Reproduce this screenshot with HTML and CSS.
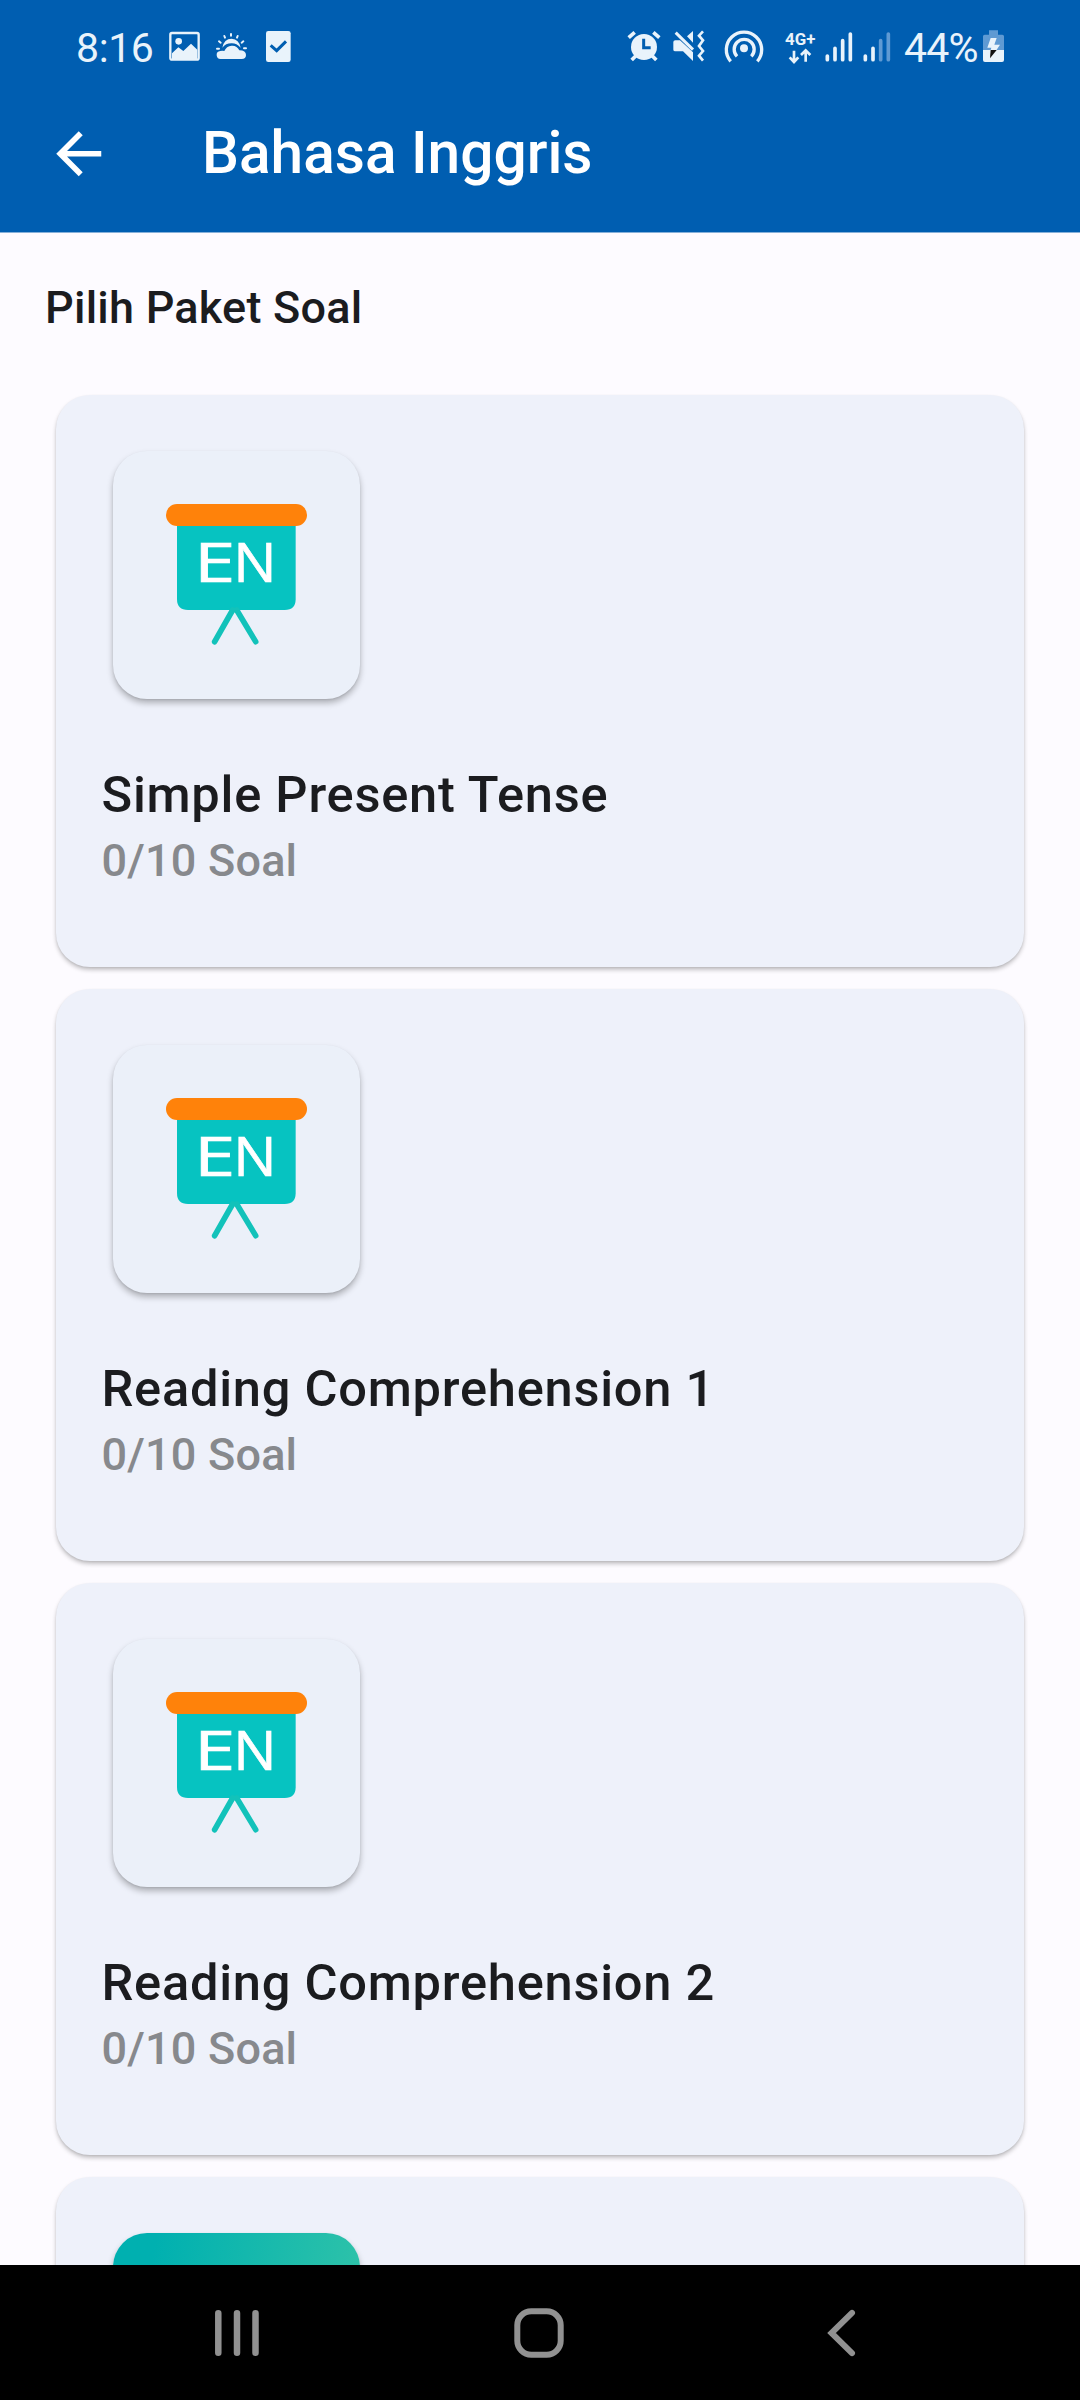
FILE: index.html
```html
<!DOCTYPE html>
<html lang="id">
<head>
<meta charset="utf-8">
<title>Bahasa Inggris</title>
<link rel="stylesheet" href="styles.css">
</head>
<body>
<svg class="defs" aria-hidden="true">
  <symbol id="board" viewBox="360 360 459 459">
    <rect x="378" y="372" width="423" height="66" rx="33" fill="#ff820a"/>
    <path d="M411 438H767V657Q767 690 734 690H444Q411 690 411 657Z" fill="#06c3c1"/>
    <path d="M578 690L524 785M590 690L647 785" stroke="#12c2ba" stroke-width="17" stroke-linecap="round" fill="none"/>
    <text x="462" y="606" textLength="124" lengthAdjust="spacingAndGlyphs" class="board-text">E</text>
    <text x="580" y="606" textLength="130" lengthAdjust="spacingAndGlyphs" class="board-text">N</text>
  </symbol>
</svg>
<header class="header">
  <div class="status">
    <span class="time">8:16</span>
    <svg class="ic-picture" width="34" height="37" viewBox="384 84 102 111">
      <rect x="391" y="99" width="85" height="80" rx="5" fill="none" stroke="#e9f3fb" stroke-width="7"/>
      <circle cx="416" cy="124" r="10"/>
      <path d="M396 160L415 142L430 153L453 131L472 149V178H396Z"/>
    </svg>
    <svg class="ic-weather" width="34" height="37" viewBox="525 84 102 111">
      <path d="M543 177A12 12 0 0 1 541 153Q547 151 553 153Q559 138 575 137Q591 136 598 151Q618 151 618 165Q618 177 605 177Z"/>
      <path d="M547 143Q552 116 575 116Q597 117 602 143Q589 129 574 130Q557 130 547 143Z"/>
      <path d="M573 102V107M553 108L555 113M593 108L591 113M537 124L542 128M610 124L605 128M531 146H537M612 145H618" stroke="#e9f3fb" stroke-width="6" stroke-linecap="round"/>
    </svg>
    <svg class="ic-check" width="29" height="37" viewBox="672 84 87 111">
      <rect x="678" y="93" width="74" height="93" rx="7"/>
      <path d="M692 136L710 152L738 124" fill="none" stroke="#005eb1" stroke-width="9"/>
    </svg>
    <span class="spacer"></span>
    <svg width="36" height="37" viewBox="78 84 108 111">
      <circle cx="132" cy="141" r="39"/>
      <path d="M86 113L104 97M160 97L178 113" stroke="#e9f3fb" stroke-width="11"/>
      <path d="M95 180L107 168M157 168L169 180" stroke="#e9f3fb" stroke-width="11"/>
      <path d="M131 116V143H152" fill="none" stroke="#005eb1" stroke-width="9"/>
    </svg>
    <svg class="ic-mute" width="34" height="37" viewBox="216 84 102 111">
      <path d="M220 126Q220 121 226 121H240L279 157V183L249 154H226Q220 154 220 149Z"/>
      <path d="M227 98L279 149" stroke="#e9f3fb" stroke-width="9"/>
      <path d="M261 109L279 93V128Z"/>
      <path d="M309 94L297 107L309 121L297 138L309 153L297 167L309 182" fill="none" stroke="#e9f3fb" stroke-width="8"/>
    </svg>
    <svg class="ic-hotspot" width="40" height="37" viewBox="372 84 120 111">
      <circle cx="432" cy="145" r="12"/>
      <path d="M411 169A30 30 0 1 1 454 169M392 184A53 53 0 1 1 472 184" fill="none" stroke="#e9f3fb" stroke-width="10"/>
    </svg>
    <svg class="ic-network" width="33" height="37" viewBox="552 84 99 111">
      <text x="555" y="135" textLength="91" lengthAdjust="spacingAndGlyphs" class="network-text">4G+</text>
      <path d="M582 152V184M569 172L582 186L595 172M617 185V153M603 165L617 151L631 165" fill="none" stroke="#e9f3fb" stroke-width="8"/>
    </svg>
    <svg class="ic-signal" width="29" height="37" viewBox="15 84 87 111">
      <path d="M22 168V179M45 145V179M68 122V179M91 102V179" stroke="#e9f3fb" stroke-width="11" stroke-linecap="round"/>
    </svg>
    <svg class="ic-signal2" width="29" height="37" viewBox="129 84 87 111">
      <path d="M136 168V179M159 145V179" stroke="#e9f3fb" stroke-width="11" stroke-linecap="round"/>
      <path d="M182 122V179M205 102V179" stroke="#5f9ad3" stroke-width="11" stroke-linecap="round"/>
    </svg>
    <span class="percent">44%</span>
    <svg width="23" height="37" viewBox="486 84 69 111">
      <path d="M507 91H534V104H547Q552 104 552 109V150H489V109Q489 104 494 104H507Z" fill="#5f9ad3"/>
      <path d="M489 150H552V180Q552 186 546 186H495Q489 186 489 180Z"/>
      <path d="M512 114H530L523 134H540L529 151H512L514 143H502Z"/>
      <path d="M512 150H530L510 175Z" fill="#111"/>
    </svg>
  </div>
  <div class="appbar">
    <svg class="back" viewBox="0 0 24 24"><path d="M20 11H7.83l5.59-5.59L12 4l-8 8 8 8 1.41-1.41L7.83 13H20v-2z" fill="#fff"/></svg>
    <h1 class="title">Bahasa Inggris</h1>
  </div>
</header>
<main class="content">
  <h2 class="section">Pilih Paket Soal</h2>
  <div class="list">
    <article class="card">
      <div class="thumb"><svg class="board"><use href="#board"/></svg></div>
      <h3 class="name">Simple Present Tense</h3>
      <p class="count">0/10 Soal</p>
    </article>
    <article class="card">
      <div class="thumb"><svg class="board"><use href="#board"/></svg></div>
      <h3 class="name">Reading Comprehension 1</h3>
      <p class="count">0/10 Soal</p>
    </article>
    <article class="card">
      <div class="thumb"><svg class="board"><use href="#board"/></svg></div>
      <h3 class="name">Reading Comprehension 2</h3>
      <p class="count">0/10 Soal</p>
    </article>
    <article class="card">
      <div class="thumb thumb-gradient"></div>
    </article>
  </div>
</main>
<nav class="nav">
  <svg class="nav-recent" width="44" height="50" viewBox="0 0 44 50"><path d="M3.3 5.3V44.7M22 5.3V44.7M40.5 5.3V44.7" stroke="#919191" stroke-width="6.5" stroke-linecap="round"/></svg>
  <svg class="nav-home" width="50" height="50" viewBox="0 0 50 50"><rect x="3.3" y="3.3" width="43.4" height="43.4" rx="14" fill="none" stroke="#919191" stroke-width="6"/></svg>
  <svg class="nav-back" width="30" height="50" viewBox="0 0 30 50"><path d="M25 4.9L4.5 25L25 45.1" fill="none" stroke="#919191" stroke-width="6" stroke-linecap="round"/></svg>
</nav>
</body>
</html>
```
FILE: styles.css
```css
* { box-sizing: border-box; margin: 0; padding: 0; }
body {
  width: 1080px;
  height: 2400px;
  overflow: hidden;
  display: flex;
  flex-direction: column;
  background: #fdfbff;
  color: #1b1c1f;
  font-family: Roboto, sans-serif;
}
.defs { display: none; }
.header {
  flex: none;
  height: 233px;
  background: #005eb1;
  border-bottom: 1px solid #86b0d9;
  color: #fff;
}
.status {
  display: flex;
  align-items: center;
  height: 93px;
  padding: 0 75px 0 76px;
  color: #e9f3fb;
  fill: #e9f3fb;
  font-size: 41px;
  line-height: 48px;
}
.status svg { flex: none; }
.time { width: 92px; padding-top: 2px; letter-spacing: -.4px; }
.ic-weather { margin-left: 13px; }
.ic-check { margin-left: 15px; }
.spacer { flex: 1; }
.ic-mute { margin-left: 10px; }
.ic-hotspot { margin-left: 18px; }
.ic-network { margin-left: 20px; }
.ic-signal { margin-left: 8px; }
.ic-signal2 { margin-left: 9px; }
.percent { width: 90px; padding: 2px 0 0 12px; letter-spacing: -.8px; }
.network-text { font: 700 48px Roboto, sans-serif; }
.appbar {
  display: flex;
  padding: 25px 45px 0;
}
.back { width: 67.5px; height: 67.5px; margin-top: 2px; }
.title {
  margin-left: 89.5px;
  font-size: 58.6px;
  line-height: 70px;
  font-weight: 500;
}
.content {
  flex: 1;
  min-height: 0;
  overflow: hidden;
  padding: 48px 45px 0;
}
.section {
  font-size: 45px;
  line-height: 53px;
  font-weight: 500;
  letter-spacing: .22px;
}
.list {
  display: flex;
  flex-direction: column;
  gap: 22.5px;
  padding: 61px 11px 0;
}
.card {
  flex: none;
  height: 571.5px;
  padding: 56px 45px 0;
  border-radius: 34px;
  background: #eef1fa;
  box-shadow: 0 3px 4px rgba(0, 0, 0, .22), 0 1px 2px rgba(0, 0, 0, .08);
}
.thumb {
  display: grid;
  place-items: center;
  width: 247px;
  height: 248px;
  padding-top: 3px;
  margin-left: 12px;
  border-radius: 34px;
  background: #ebf0f9;
  box-shadow: 0 4px 6px rgba(0, 0, 0, .27), 0 1px 2px rgba(0, 0, 0, .08);
}
.thumb-gradient { background: linear-gradient(100deg, #00b0b0 15%, #35c5a8); }
.board { width: 153px; height: 153px; }
.board-text {
  font: 400 167px "Open Sans", sans-serif;
  fill: #fff;
  stroke: #fff;
  stroke-width: 2px;
}
.name {
  margin-top: 66px;
  padding-left: .5px;
  font-size: 50.6px;
  line-height: 60px;
  font-weight: 500;
  letter-spacing: .75px;
}
.count {
  margin-top: 9px;
  padding-left: .5px;
  font-size: 45px;
  line-height: 53px;
  font-weight: 500;
  letter-spacing: .2px;
  color: #87898d;
}
.nav {
  flex: none;
  display: flex;
  align-items: center;
  height: 135px;
  padding: 1px 0 0 215px;
  background: #000;
}
.nav-home { margin-left: 255px; }
.nav-back { margin-left: 263px; }
```
